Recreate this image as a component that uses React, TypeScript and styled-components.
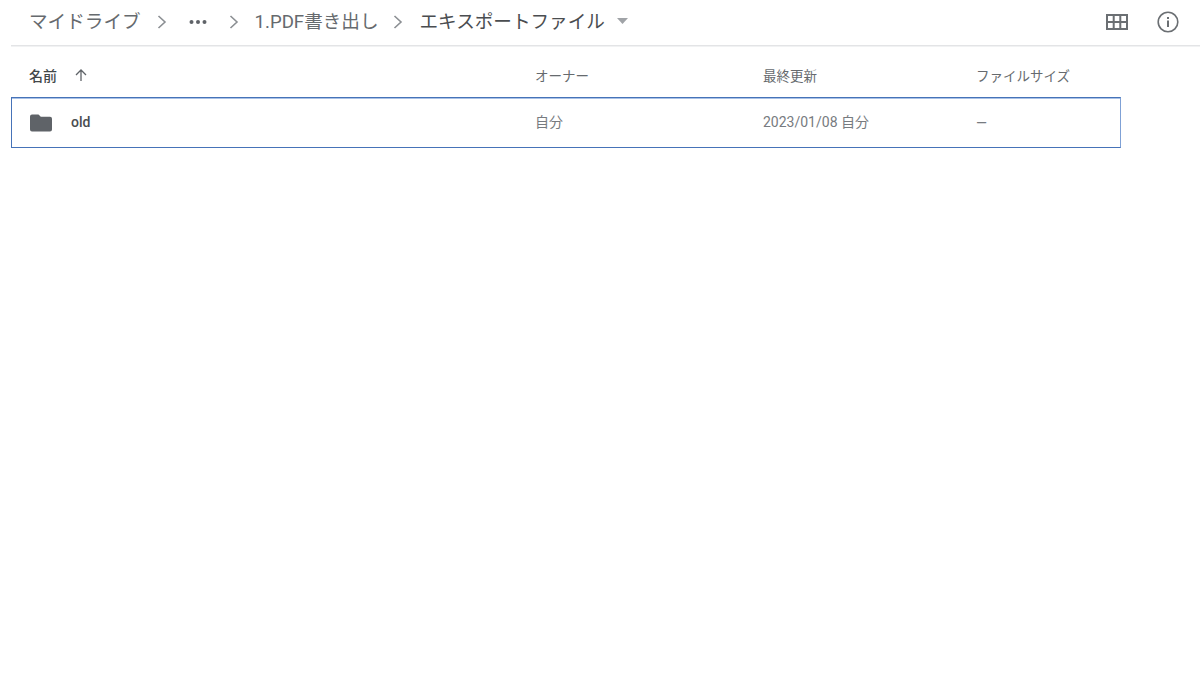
import * as React from 'react';
import styled, { createGlobalStyle } from 'styled-components';

const GlobalStyle = createGlobalStyle`
  html, body {
    margin: 0;
    padding: 0;
    background: #ffffff;
  }
  body {
    font-family: Roboto, "Noto Sans CJK JP", sans-serif;
    color: #5f6368;
  }
`;

const Page = styled.div`
  width: 1200px;
  height: 695px;
  box-sizing: border-box;
  padding-left: 11px;
  overflow: hidden;
  background: #fff;
`;

const TopBar = styled.header`
  height: 46px;
  box-sizing: border-box;
  border-bottom: 1px solid #e3e4e6;
  box-shadow: 0 1px 0 #f1f2f3;
  display: flex;
  align-items: center;
  padding: 0 21px 1px 18px;
`;

const Crumb = styled.span<{ $dark?: boolean }>`
  font-size: 18.6px;
  line-height: 24px;
  white-space: nowrap;
  color: ${(p) => (p.$dark ? '#4a4d50' : '#666a6e')};
`;

const Chevron = styled.svg<{ $gap: number; $after: number }>`
  width: 10px;
  height: 14px;
  margin-left: ${(p) => p.$gap}px;
  margin-right: ${(p) => p.$after}px;
  flex: none;
`;

const Dots = styled.svg`
  width: 18px;
  height: 6px;
  flex: none;
`;

const Caret = styled.svg`
  width: 11px;
  height: 6px;
  margin-left: 12px;
  margin-bottom: 2px;
  flex: none;
`;

const Actions = styled.div`
  margin-left: auto;
  display: flex;
  align-items: center;
  gap: 29px;
`;

const Columns = styled.div`
  display: grid;
  grid-template-columns: 524px 228px 213px 1fr;
  align-items: center;
`;

const HeaderRow = styled(Columns)`
  width: 1110px;
  height: 51px;
  padding-top: 7px;
  box-sizing: border-box;
  font-size: 13.5px;
`;

const HeadCell = styled.div<{ $first?: boolean }>`
  display: flex;
  align-items: center;
  gap: 17px;
  padding-left: ${(p) => (p.$first ? '18px' : '0')};
  font-size: ${(p) => (p.$first ? '14px' : '13.5px')};
  font-weight: ${(p) => (p.$first ? 500 : 400)};
  color: ${(p) => (p.$first ? '#43474a' : '#666a6e')};
`;

const FileRow = styled(Columns)`
  width: 1110px;
  height: 51px;
  box-sizing: border-box;
  border: 1px solid #4673b8;
  border-right-color: #7fa1d6;
  box-shadow: inset 0 1px 0 #a9c1e6;
  font-size: 14px;
`;

const NameCell = styled.div`
  display: flex;
  align-items: center;
  gap: 19px;
  padding-left: 18px;
  font-weight: 500;
  color: #4a4d50;
`;

const NameLabel = styled.span`
  padding-bottom: 2px;
`;

const Cell = styled.div<{ $dash?: boolean }>`
  color: #777b80;
  margin-left: -1px;
  padding-bottom: ${(p) => (p.$dash ? '0' : '3px')};
`;

const App: React.FC = () => (
  <Page>
    <GlobalStyle />
    <TopBar>
      <Crumb>マイドライブ</Crumb>
      <Chevron $gap={16} $after={22} viewBox="0 0 10 14">
        <path d="M1.5 1 L8 7 L1.5 13" fill="none" stroke="#8b8f93" strokeWidth="1.6" />
      </Chevron>
      <Dots viewBox="0 0 18 6">
        <circle cx="2.5" cy="3" r="2" fill="#5f6368" />
        <circle cx="9" cy="3" r="2" fill="#5f6368" />
        <circle cx="15.5" cy="3" r="2" fill="#5f6368" />
      </Dots>
      <Chevron $gap={22} $after={16} viewBox="0 0 10 14">
        <path d="M1.5 1 L8 7 L1.5 13" fill="none" stroke="#8b8f93" strokeWidth="1.6" />
      </Chevron>
      <Crumb>1.PDF書き出し</Crumb>
      <Chevron $gap={14} $after={17} viewBox="0 0 10 14">
        <path d="M1.5 1 L8 7 L1.5 13" fill="none" stroke="#8b8f93" strokeWidth="1.6" />
      </Chevron>
      <Crumb $dark>エキスポートファイル</Crumb>
      <Caret viewBox="0 0 11 6">
        <path d="M0 0 H11 L5.5 6 Z" fill="#a0a3a7" />
      </Caret>
      <Actions>
        <svg width="22" height="16" viewBox="0 0 22 16">
          <path
            d="M1 1 H21 V15 H1 Z M1 8 H21 M7.7 1 V15 M14.3 1 V15"
            fill="none"
            stroke="#6b6f73"
            strokeWidth="2"
          />
        </svg>
        <svg width="22" height="22" viewBox="0 0 22 22">
          <circle cx="11" cy="11" r="9.8" fill="none" stroke="#6b6f73" strokeWidth="1.6" />
          <rect x="10" y="9.5" width="2" height="6.5" fill="#6b6f73" />
          <rect x="10" y="6" width="2" height="2" fill="#6b6f73" />
        </svg>
      </Actions>
    </TopBar>
    <HeaderRow>
      <HeadCell $first>
        名前
        <svg width="14" height="14" viewBox="0 0 14 14">
          <path d="M7 13 V2 M2 7 L7 2 L12 7" fill="none" stroke="#5f6368" strokeWidth="1.3" />
        </svg>
      </HeadCell>
      <HeadCell>オーナー</HeadCell>
      <HeadCell>最終更新</HeadCell>
      <HeadCell>ファイルサイズ</HeadCell>
    </HeaderRow>
    <FileRow>
      <NameCell>
        <svg width="22" height="18" viewBox="0 0 22 18">
          <path
            d="M2 0.5 H8.5 L10.8 2.8 H20 A2 2 0 0 1 22 4.8 V15.5 A2 2 0 0 1 20 17.5 H2 A2 2 0 0 1 0 15.5 V2.5 A2 2 0 0 1 2 0.5 Z"
            fill="#5f6368"
          />
        </svg>
        <NameLabel>old</NameLabel>
      </NameCell>
      <Cell>自分</Cell>
      <Cell>2023/01/08 自分</Cell>
      <Cell $dash>—</Cell>
    </FileRow>
  </Page>
);

export default App;
